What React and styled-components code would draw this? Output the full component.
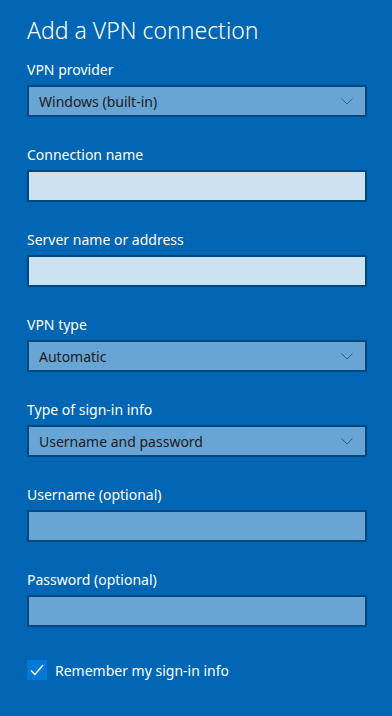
import React from "react";
import styled, { createGlobalStyle } from "styled-components";

const GlobalStyle = createGlobalStyle`
  html, body {
    margin: 0;
    padding: 0;
    background: #0066b4;
  }
`;

const Page = styled.div`
  width: 392px;
  height: 716px;
  box-sizing: border-box;
  background: #0066b4;
  padding: 18px 26px 0 27px;
  font-family: "Segoe UI", "Noto Sans", sans-serif;
  color: #ffffff;
  display: flex;
  flex-direction: column;
`;

const Title = styled.h1`
  margin: 0 0 18px 0;
  font-size: 23px;
  line-height: 24px;
  font-weight: 300;
`;

const Field = styled.div`
  display: flex;
  flex-direction: column;
  gap: 5px;
  margin-bottom: 28px;
`;

const Label = styled.label`
  font-size: 14px;
  line-height: 20px;
`;

const Box = styled.div`
  box-sizing: border-box;
  width: 340px;
  height: 32px;
  border: 2px solid #00467f;
  background: ${(p) => (p.$light ? "#cce1f1" : "#68a5d5")};
  display: flex;
  align-items: center;
  justify-content: space-between;
  padding: 0 12px 0 10px;
  color: #1b1b1b;
  font-size: 14px;
`;

const Chevron = () => (
  <svg width="12" height="7" viewBox="0 0 12 7">
    <path d="M0.5 0.5 L6 6 L11.5 0.5" fill="none" stroke="#3c5f7d" strokeWidth="1" />
  </svg>
);

const CheckRow = styled.div`
  display: flex;
  align-items: center;
  gap: 8px;
  margin-top: 5px;
  font-size: 14px;
`;

const CheckBox = styled.div`
  width: 20px;
  height: 20px;
  background: #0078d7;
  display: flex;
  align-items: center;
  justify-content: center;
`;

const SelectField = ({ label, value }) => (
  <Field>
    <Label>{label}</Label>
    <Box>
      <span>{value}</span>
      <Chevron />
    </Box>
  </Field>
);

const InputField = ({ label, light }) => (
  <Field>
    <Label>{label}</Label>
    <Box $light={light} />
  </Field>
);

export default function App() {
  return (
    <>
      <GlobalStyle />
      <Page>
        <Title>Add a VPN connection</Title>
        <SelectField label="VPN provider" value="Windows (built-in)" />
        <InputField label="Connection name" light />
        <InputField label="Server name or address" light />
        <SelectField label="VPN type" value="Automatic" />
        <SelectField label="Type of sign-in info" value="Username and password" />
        <InputField label="Username (optional)" />
        <InputField label="Password (optional)" />
        <CheckRow>
          <CheckBox>
            <svg width="14" height="12" viewBox="0 0 14 12">
              <path d="M1 6.5 L5 10.5 L13 1" fill="none" stroke="#ffffff" strokeWidth="1.5" />
            </svg>
          </CheckBox>
          <span>Remember my sign-in info</span>
        </CheckRow>
      </Page>
    </>
  );
}
